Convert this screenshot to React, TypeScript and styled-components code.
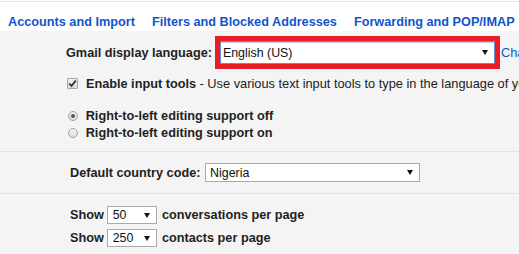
import React from "react";
import styled, { createGlobalStyle } from "styled-components";

const GlobalStyle = createGlobalStyle`
  html, body { margin: 0; padding: 0; background: #f4f4f4; overflow: hidden; }
  body { font-family: "Liberation Sans", Arial, sans-serif; color: #222; }
`;

const Page = styled.div`
  width: 519px;
  height: 254px;
  overflow: hidden;
  background: #f4f4f4;
`;

const Header = styled.div`
  background: #fff;
  padding-top: 1px;
`;

const TabBar = styled.nav`
  display: flex;
  gap: 17px;
  height: 30px;
  box-sizing: border-box;
  padding: 12px 0 0 8px;
  border-top: 1px solid #e6e6e6;
  background: #fff;
`;

const Tab = styled.a`
  font-size: 12.7px;
  font-weight: bold;
  line-height: 16px;
  color: #1155cc;
  white-space: nowrap;
  text-decoration: none;
`;

const Section = styled.section<{ $pad: string; $border?: boolean }>`
  padding: ${(p) => p.$pad};
  border-bottom: ${(p) => (p.$border ? "1px solid #e2e2e2" : "none")};
`;

const Row = styled.div<{ $h: number; $mt?: number }>`
  display: flex;
  align-items: center;
  height: ${(p) => p.$h}px;
  margin-top: ${(p) => p.$mt ?? 0}px;
  white-space: nowrap;
`;

const Strong = styled.span<{ $mr?: number }>`
  font-size: 12.7px;
  font-weight: bold;
  line-height: 16px;
  color: #222;
  margin-right: ${(p) => p.$mr ?? 0}px;
`;

const Plain = styled.span`
  font-size: 12.8px;
  line-height: 16px;
  color: #222;
`;

const Link = styled.a`
  font-size: 12.8px;
  line-height: 16px;
  color: #1155cc;
  margin-left: 6px;
  text-decoration: none;
`;

const Select = styled.div<{ $w: number; $h: number; $focus?: boolean; $pl: number }>`
  display: flex;
  align-items: center;
  justify-content: space-between;
  flex-shrink: 0;
  box-sizing: border-box;
  width: ${(p) => p.$w}px;
  height: ${(p) => p.$h}px;
  padding: 0 6px 0 ${(p) => p.$pl}px;
  background: #fff;
  border: 1px solid ${(p) => (p.$focus ? "#6a8ed4" : "#a9a9a9")};
  box-shadow: ${(p) => (p.$focus ? "inset 0 1px 0 #b8c9ec" : "none")};
  outline: ${(p) => (p.$focus ? "5px solid #ec1c24" : "none")};
  font-size: 12.4px;
  line-height: 16px;
  color: #111;
`;

const Arrow = styled.span`
  width: 0;
  height: 0;
  border-left: 3px solid transparent;
  border-right: 3px solid transparent;
  border-top: 5px solid #111;
`;

const Checkbox = styled.span`
  display: inline-flex;
  align-items: center;
  justify-content: center;
  width: 11px;
  height: 11px;
  box-sizing: border-box;
  margin: 0 8px 0 1px;
  border: 1px solid #a8a8a8;
  border-radius: 1px;
  background: linear-gradient(#f0f0f0, #dcdcdc);
`;

const Radio = styled.span<{ $on?: boolean }>`
  display: inline-flex;
  align-items: center;
  justify-content: center;
  width: 10px;
  height: 10px;
  box-sizing: border-box;
  margin: 0 8px 0 1.7px;
  border: 1px solid #a3a3a3;
  border-radius: 50%;
  background: linear-gradient(#f2f2f2, #dedede);
  &::after {
    content: "";
    display: ${(p) => (p.$on ? "block" : "none")};
    width: 4px;
    height: 4px;
    border-radius: 50%;
    background: #555;
  }
`;

const RadioList = styled.div`
  margin-top: 15.4px;
`;

const ShowList = styled.div`
  display: flex;
  flex-direction: column;
  gap: 5.3px;
`;

export default function App() {
  return (
    <>
      <GlobalStyle />
      <Page>
        <Header>
          <TabBar>
            <Tab>Accounts and Import</Tab>
            <Tab>Filters and Blocked Addresses</Tab>
            <Tab>Forwarding and POP/IMAP</Tab>
          </TabBar>
        </Header>

        <Section $pad="10px 0 9px 66px" $border>
          <Row $h={23}>
            <Strong $mr={8}>Gmail display language:</Strong>
            <Select $w={275} $h={23} $focus $pl={2}>
              English (US)
              <Arrow />
            </Select>
            <Link>Change language settings for other Google products</Link>
          </Row>
          <Row $h={16} $mt={11.5}>
            <Checkbox>
              <svg width="9" height="9" viewBox="0 0 9 9">
                <path d="M1.2 4.6 L3.5 6.9 L7.8 1.6" fill="none" stroke="#333" strokeWidth="1.7" />
              </svg>
            </Checkbox>
            <Strong>Enable input tools</Strong>
            <Plain>&nbsp;- Use various text input tools to type in the language of your choice</Plain>
          </Row>
          <RadioList>
            <Row $h={17.6}>
              <Radio $on />
              <Strong>Right-to-left editing support off</Strong>
            </Row>
            <Row $h={17.6}>
              <Radio />
              <Strong>Right-to-left editing support on</Strong>
            </Row>
          </RadioList>
        </Section>

        <Section $pad="11px 0 11px 70px" $border>
          <Row $h={19}>
            <Strong $mr={4.7}>Default country code:</Strong>
            <Select $w={215} $h={19} $pl={4}>
              Nigeria
              <Arrow />
            </Select>
          </Row>
        </Section>

        <Section $pad="12px 0 0 70px">
          <ShowList>
            <Row $h={18}>
              <Strong $mr={3.4}>Show</Strong>
              <Select $w={50} $h={18} $pl={4.4}>
                50
                <Arrow />
              </Select>
              <Strong style={{ marginLeft: 4.7 }}>conversations per page</Strong>
            </Row>
            <Row $h={18}>
              <Strong $mr={3.4}>Show</Strong>
              <Select $w={50} $h={18} $pl={4.4}>
                250
                <Arrow />
              </Select>
              <Strong style={{ marginLeft: 4.7 }}>contacts per page</Strong>
            </Row>
          </ShowList>
        </Section>
      </Page>
    </>
  );
}
